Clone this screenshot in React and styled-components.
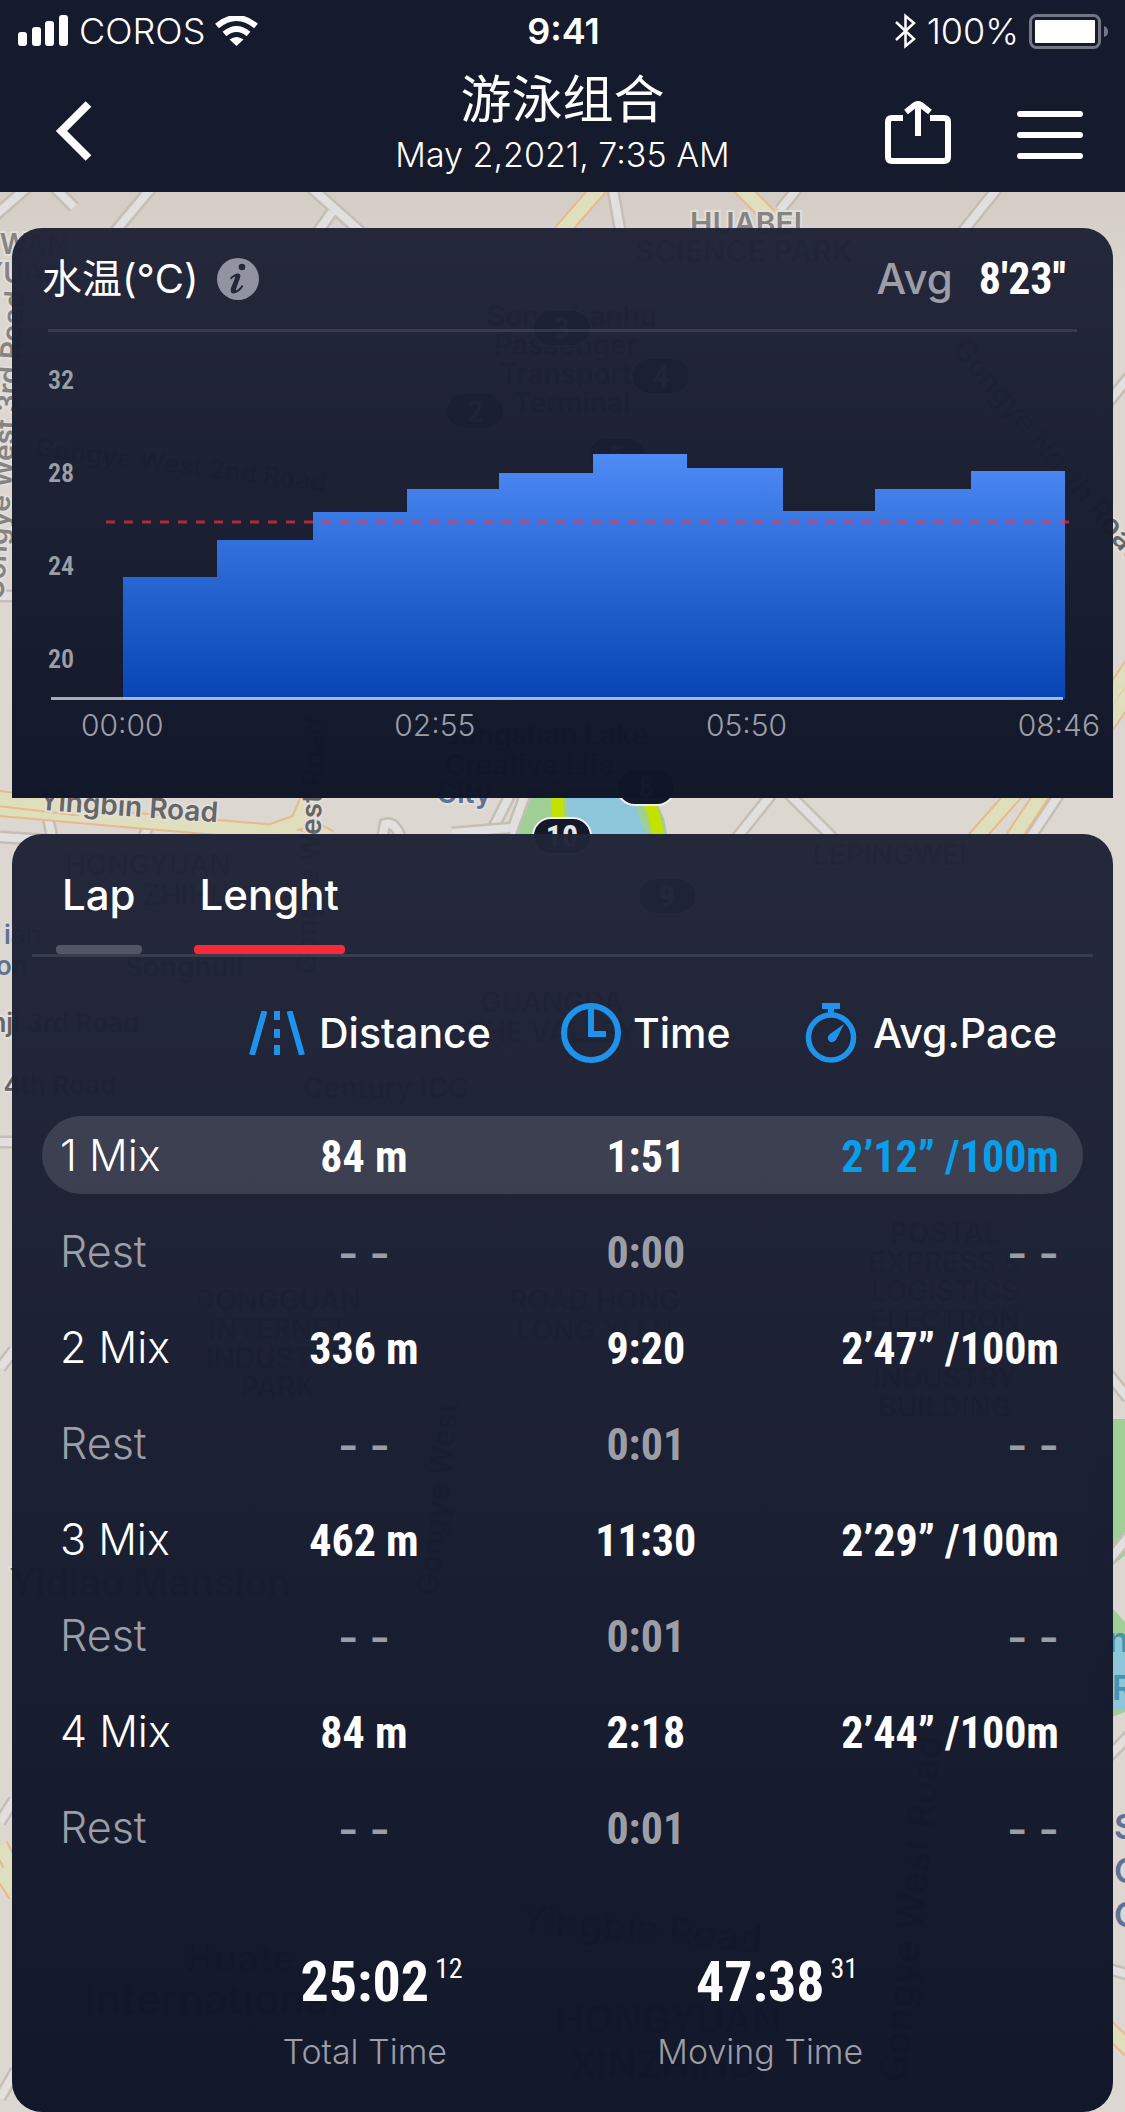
import React from "react";
import styled, { createGlobalStyle } from "styled-components";

const SANS = `"Inter", "Liberation Sans", "Noto Sans CJK SC", sans-serif`;
const NARROW = `"Liberation Sans Narrow", "Roboto Condensed", "Open Sans Condensed", "Roboto", sans-serif`;
const MUTED = "#9b9ea7";
const BLUE = "#1f93ec";

const GlobalStyle = createGlobalStyle`
  * { box-sizing: border-box; }
  body { margin: 0; background: #dcd8d1; font-family: ${SANS}; color: #fff; }
  button { border: 0; padding: 0; background: none; color: inherit; font: inherit; cursor: pointer; }
  svg { display: block; flex: none; }
  h1, h2, p { margin: 0; font-weight: 400; }
`;

const Screen = styled.div`
  position: relative;
  overflow: hidden;
`;

const MapCanvas = styled.svg`
  position: absolute;
  inset: 0;
  width: 100%;
  height: 100%;
  font-family: ${SANS};
`;

const Header = styled.header`
  position: relative;
  height: 192px;
  background: #151a2d;
`;

const StatusBar = styled.div`
  display: grid;
  grid-template-columns: 1fr auto 1fr;
  align-items: center;
  height: 62px;
  padding: 0 16px 0 18px;
`;

const StatusGroup = styled.div`
  display: flex;
  align-items: center;
  justify-content: ${(p) => (p.$end ? "flex-end" : "flex-start")};
  gap: 10px;
  font-size: 36px;
  font-weight: 300;
  line-height: 40px;
`;

const Clock = styled.div`
  font-size: 36px;
  font-weight: 600;
  line-height: 40px;
`;

const NavBar = styled.nav`
  display: grid;
  grid-template-columns: 1fr auto 1fr;
  align-items: center;
  height: 130px;
  padding: 12px 42px 0;
`;

const BackSlot = styled.div`
  padding-left: 12px;
`;

const TitleBlock = styled.div`
  margin: -6px 0;
  padding-bottom: 8px;
  text-align: center;
`;

const Title = styled.h1`
  height: 64px;
  font-size: 51px;
  line-height: 64px;
`;

const Subtitle = styled.p`
  height: 58px;
  font-size: 34px;
  font-weight: 300;
  line-height: 46px;
`;

const NavActions = styled.div`
  display: flex;
  justify-content: flex-end;
  gap: 66px;
`;

const Content = styled.main`
  position: relative;
  display: flex;
  flex-direction: column;
  gap: 36px;
  padding: 36px 12px 0;
`;

const Card = styled.section`
  border-radius: ${(p) => (p.$flatBottom ? "30px 30px 0 0" : "30px")};
  background: linear-gradient(rgba(32, 36, 55, 0.975), rgba(15, 20, 39, 0.985));
`;

const CardHeader = styled.div`
  display: flex;
  align-items: center;
  justify-content: space-between;
  height: 104px;
  margin: 0 36px;
  padding: 0 11px 0 0;
  border-bottom: 3px solid rgba(255, 255, 255, 0.1);
`;

const CardTitle = styled.h2`
  display: flex;
  align-items: center;
  gap: 18px;
  margin-left: -6px;
  font-size: 40px;
  line-height: 60px;
`;

const Average = styled.p`
  display: flex;
  align-items: center;
  gap: 26px;
  color: ${MUTED};
  font-size: 42px;
  font-weight: 500;
  line-height: 60px;
`;

const AverageValue = styled.strong`
  color: #fff;
  font-family: ${NARROW};
  font-size: 44px;
  font-weight: 700;
`;

const Plot = styled.div`
  display: grid;
  grid-template-columns: 48px 1fr;
  height: 368px;
  margin: 0 36px;
`;

const Bars = styled.svg`
  grid-column: 1 / -1;
  grid-row: 1;
  width: 100%;
  height: 368px;
`;

const YAxis = styled.div`
  grid-column: 1;
  grid-row: 1;
  display: grid;
  grid-auto-rows: 93px;
  align-items: center;
  padding-top: 1px;
  color: ${MUTED};
  font-family: ${NARROW};
  font-size: 26px;
  font-weight: 600;
`;

const XAxis = styled.div`
  display: flex;
  justify-content: space-between;
  height: 98px;
  padding: 0 13px 0 69px;
  color: ${MUTED};
  font-size: 30px;
  font-weight: 300;
  line-height: 50px;
`;

const Tabs = styled.div`
  display: flex;
  align-items: flex-end;
  gap: 52px;
  height: 123px;
  margin: 0 20px;
  padding: 0 24px;
  border-bottom: 3px solid rgba(255, 255, 255, 0.1);
`;

const Tab = styled.button`
  padding: 0 6px;
  font-size: 42px;
  font-weight: 500;
  line-height: 60px;

  &::after {
    content: "";
    display: block;
    height: 9px;
    margin: 20px -6px 0;
    border-radius: 4px;
    background: ${(p) => (p.$active ? "#fa2a3b" : "#525563")};
  }
`;

const LapTable = styled.table`
  width: calc(100% - 60px);
  margin: 0 30px;
  table-layout: fixed;
  border-collapse: separate;
  border-spacing: 0 18px;
`;

const HeadCell = styled.th`
  width: ${(p) => p.$width};
  height: 123px;
  padding: 0 ${(p) => (p.$end ? "26px" : "0")} 8px 0;
  font-size: 41px;
  font-weight: 500;
`;

const HeadLabel = styled.span`
  display: flex;
  align-items: center;
  justify-content: ${(p) => (p.$end ? "flex-end" : "center")};
  gap: ${(p) => p.$gap}px;
  white-space: nowrap;
`;

const Row = styled.tr`
  color: ${(p) => (p.$rest ? MUTED : "#fff")};

  th,
  td {
    background: ${(p) => (p.$active ? "rgba(255, 255, 255, 0.13)" : "none")};
  }
  td:last-child {
    color: ${(p) => (p.$active ? "#079fe9" : "inherit")};
  }
`;

const NameCell = styled.th`
  height: 78px;
  padding: 0 0 0 18px;
  border-radius: 39px 0 0 39px;
  font-size: 43px;
  font-weight: 300;
  text-align: left;
`;

const ValueCell = styled.td`
  padding: 4px ${(p) => p.$pad || 0}px 0 0;
  border-radius: ${(p) => (p.$last ? "0 39px 39px 0" : "0")};
  font-family: ${(p) => (p.$blank ? SANS : NARROW)};
  font-size: 44px;
  font-weight: ${(p) => (p.$blank ? 600 : 700)};
  line-height: 56px;
  text-align: ${(p) => (p.$last ? "right" : "center")};
  white-space: nowrap;
`;

const Totals = styled.div`
  display: grid;
  grid-template-columns: 1fr 1fr;
  height: 228px;
  padding: 60px 155px 0;
`;

const Total = styled.div`
  text-align: center;
`;

const TotalValue = styled.p`
  display: grid;
  grid-template-columns: 1fr auto 1fr;
  column-gap: 6px;
  height: 78px;
  font-family: ${NARROW};
  font-size: 56px;
  font-weight: 700;
  line-height: 76px;
`;

const Hundredths = styled.span`
  grid-column: 3;
  text-align: left;
  font-size: 28px;
  font-weight: 400;
  line-height: 50px;
`;

const Whole = styled.span`
  grid-column: 2;
`;

const TotalLabel = styled.p`
  color: ${MUTED};
  font-size: 34px;
  font-weight: 300;
  line-height: 60px;
`;

function Road({ d, main }) {
  return (
    <g fill="none">
      <path d={d} stroke={main ? "#e8b98b" : "#c6beb4"} strokeWidth={main ? 17 : 13} />
      <path d={d} stroke={main ? "#dfdfbd" : "#e1e0df"} strokeWidth={main ? 13 : 8} />
    </g>
  );
}

const routeMarks = [
  [562, 327, 3], [661, 375, 4], [475, 410, 2], [617, 455, 5],
  [646, 786, 8], [562, 835, 10], [667, 895, 9],
];

const mapLabels = [
  [746, 234, "HUABEI", 0, 30, "#858480"], [744, 262, "SCIENCE PARK", 0, 30],
  [34, 254, "WAN", 0, 28, "#858480"], [24, 283, "YUAN", 0, 28, "#858480"],
  [572, 326, "Songshanhu", 0, 28], [566, 355, "Passenger", 0, 28], [566, 384, "Transport", 0, 28], [572, 413, "Terminal", 0, 28],
  [180, 474, "Gongye West 2nd Road", 7, 26], [1042, 458, "Gongye North Road", 50, 30],
  [14, 446, "Gongye West 3rd Road", -86, 28, "#858480"],
  [128, 816, "Yingbin Road", 4, 28], [320, 846, "Gongye West Road", -88, 28],
  [545, 745, "Songshan Lake", 0, 28], [530, 775, "Creative Life", 0, 28], [464, 803, "City", 0, 28, "#5f7196"],
  [148, 875, "HONGYUAN", 0, 28], [190, 905, "ZHIHUI", 0, 28], [890, 865, "LEPINGWEI", 0, 28],
  [184, 977, "Songhuli", 0, 28], [552, 1012, "GUANGDA", 0, 28], [552, 1042, "THE VALLEY", 0, 28],
  [54, 1032, "Jinji 3rd Road", 0, 26], [386, 1098, "Century ICC", 0, 28], [60, 1094, "4th Road", 0, 26],
  [278, 1310, "DONGGUAN", 0, 28], [278, 1339, "INTERNET", 0, 28], [278, 1368, "INDUSTRY", 0, 28], [278, 1397, "PARK", 0, 28],
  [595, 1310, "ROAD HONG", 0, 28], [595, 1340, "LONG YI LU", 0, 28],
  [945, 1243, "POSTAL", 0, 28], [945, 1272, "EXPRESS &", 0, 28], [945, 1301, "LOGISTICS", 0, 28],
  [945, 1330, "ELECTRON", 0, 28], [945, 1388, "INDUSTRY", 0, 28], [945, 1417, "BUILDING", 0, 28],
  [150, 1596, "Yidiao Mansion", 0, 38], [448, 1500, "Gongye West", -84, 30],
  [640, 1942, "Yingbin Road", 5, 38], [240, 1972, "Huate", 0, 38], [212, 2014, "International", 0, 42],
  [668, 2033, "HONGYUAN", 0, 38], [668, 2078, "XINZHIHUI", 0, 38], [924, 1910, "Gongye West Road", -84, 38],
];

function MapBackdrop() {
  return (
    <MapCanvas viewBox="0 0 1125 2112" preserveAspectRatio="xMidYMin slice" aria-hidden="true">
      <defs>
        <linearGradient id="land" x1="0" y1="192" x2="0" y2="300" gradientUnits="userSpaceOnUse">
          <stop offset="0" stopColor="#d3cdc6" />
          <stop offset="1" stopColor="#dcd8d1" />
        </linearGradient>
      </defs>
      <rect width="1125" height="2112" fill="url(#land)" />
      <path d="M528 790 511 818 524 850 670 850 664 818 650 790Z" fill="#9fcf94" />
      <path d="M566 790 572 850 655 850 640 820 632 790Z" fill="#8dc6da" />
      <path d="M1090 1419H1125V1555L1105 1572V1600L1125 1622V1712L1090 1725Z" fill="#9fcf94" />
      <path d="M1105 1640H1125V1710H1105Z" fill="#8dc6da" />
      <Road d="M-10 220 30 185M52 185 74 207M108 240 154 185M308 185 370 240M312 240 332 212" />
      <Road d="M612 185 622 240M780 210 800 185M956 240 1000 185M1100 412 1130 376" />
      <Road d="M0 596H40M0 837 60 841M48 818 55 850M150 822 138 850M510 795 482 850M525 795 505 850" />
      <Road d="M380 850 385 824Q398 820 404 850M452 833 510 828M735 840 775 790M785 790 835 840M1022 850 1062 790" />
      <Road d="M0 1142H16M0 1368 14 1350M1105 1370 1128 1398M1105 1565 1130 1535M0 1822 14 1800M1105 1760 1130 1735M0 2098 16 2070M1105 1968 1130 1975" />
      <Road main d="M554 240 602 185M738 185 778 225M-5 808 130 820 270 832 298 822 312 790M270 830 345 850M305 825 330 838" />
      <Road main d="M-5 798 80 808M965 850 1018 790M1005 850 1045 790M1105 705 1135 660M1105 728 1135 685M0 1845 16 1875M0 1870 16 1895M1105 2025 1130 2050" />
      <path d="M556 780 560 850M640 780Q656 812 661 850" fill="none" stroke="#c3e200" strokeWidth="12" />
      {mapLabels.map(([x, y, text, angle, size, fill = "#666664"]) => (
        <text
          key={`${x}-${y}`} x={x} y={y} fontSize={size} fontWeight="600" textAnchor="middle"
          fill={fill} stroke="#e2deda" strokeWidth="4" paintOrder="stroke"
          transform={`rotate(${angle} ${x} ${y})`}
        >
          {text}
        </text>
      ))}
      {routeMarks.map(([x, y, n]) => (
        <g key={n}>
          <rect x={x - 29} y={y - 17} width="58" height="36" rx="18" fill="#131828" stroke="#eee" strokeWidth="2" />
          <text x={x} y={y + 12} fontSize="32" fontWeight="700" fontFamily="Roboto Condensed" textAnchor="middle" fill="#e4e4e4">{n}</text>
        </g>
      ))}
      <g fontWeight="600" fill="#5f7196">
        <g fontSize="34">
          <text x="1114" y="1839">S</text>
          <text x="1114" y="1883">C</text>
          <text x="1114" y="1927">C</text>
        </g>
        <g fontSize="26">
          <text x="4" y="944">ian</text>
          <text x="-4" y="975">on</text>
        </g>
        <g fontSize="34" fill="#4794ae">
          <text x="1108" y="1652">n</text>
          <text x="1112" y="1700">R</text>
        </g>
      </g>
    </MapCanvas>
  );
}

const SignalIcon = () => (
  <svg width="51" height="32" viewBox="0 0 51 32" fill="#fff" aria-hidden="true">
    <rect x="0" y="17" width="9" height="14" rx="3" />
    <rect x="14" y="12" width="9" height="19" rx="3" />
    <rect x="27" y="6" width="9" height="25" rx="3" />
    <rect x="41" y="0" width="9" height="31" rx="3" />
  </svg>
);

const WifiIcon = () => (
  <svg width="43" height="30" viewBox="0 0 43 30" aria-hidden="true">
    <path d="M2 10Q21.500-6 41 10M9.500 18Q21.500 8 33.500 18" fill="none" stroke="#fff" strokeWidth="6" />
    <path d="M14.500 23.500Q21.500 18.500 28.500 23.500L21.500 30Z" fill="#fff" />
  </svg>
);

const BluetoothIcon = () => (
  <svg width="22" height="36" viewBox="0 0 22 36" fill="none" stroke="#fff" strokeWidth="2.500" aria-hidden="true">
    <path d="M1 9 19 26 10.500 33V3L19 10 1 27" />
  </svg>
);

const BatteryIcon = () => (
  <svg width="80" height="36" viewBox="0 0 80 36" aria-hidden="true">
    <rect x="1.500" y="2.500" width="69" height="32" rx="6" fill="none" stroke="#747783" strokeWidth="3" />
    <rect x="6" y="7" width="60" height="23" rx="1" fill="#fff" />
    <path d="M75 13Q79 14 79 18.500T75 24Z" fill="#747783" />
  </svg>
);

const BackIcon = () => (
  <svg width="38" height="60" viewBox="0 0 38 60" fill="none" stroke="#fff" strokeWidth="8" aria-hidden="true">
    <path d="M34.500 3 7.500 30 34.500 57" />
  </svg>
);

const ShareIcon = () => (
  <svg width="66" height="64" viewBox="0 0 66 64" fill="none" stroke="#fff" strokeWidth="6" aria-hidden="true">
    <path d="M18 17H7Q3 17 3 21V56Q3 60 7 60H59Q63 60 63 56V21Q63 17 59 17H45" />
    <path d="M33 35V5M21 11 30 4Q33 2 36 4L45 11" />
  </svg>
);

const MenuIcon = () => (
  <svg width="66" height="64" viewBox="0 0 66 64" stroke="#fff" strokeWidth="6" strokeLinecap="round" aria-hidden="true">
    <path d="M3 13H63M3 34H63M3 55H63" />
  </svg>
);

const InfoIcon = () => (
  <svg width="42" height="42" viewBox="0 0 42 42" aria-hidden="true">
    <circle cx="21" cy="21" r="21" fill="#9194a0" />
    <circle cx="25" cy="9" r="3.300" fill="#24283b" />
    <path d="M13 20Q18 15 21 15.500 24.500 16 23 20L19 31Q18.500 33 20 32 23 30 25 27L26.500 28Q22 35 17 35.500 12.500 35.500 14 30L18 20Q18.500 18 17 19L14 21.500Z" fill="#24283b" />
  </svg>
);

const RoadIcon = () => (
  <svg width="56" height="44" viewBox="0 0 56 44" fill="none" stroke={BLUE} aria-hidden="true">
    <path d="M15.500 0 3 44M40.500 0 53 44" strokeWidth="6" />
    <path d="M28 0V9M28 18V27M28 34V44" strokeWidth="6" />
  </svg>
);

const ClockIcon = () => (
  <svg width="60" height="60" viewBox="0 0 60 60" fill="none" stroke={BLUE} aria-hidden="true">
    <circle cx="30" cy="30" r="27" strokeWidth="6" />
    <path d="M30 6V31H45" strokeWidth="6" />
  </svg>
);

const StopwatchIcon = () => (
  <svg width="52" height="60" viewBox="0 0 52 60" aria-hidden="true">
    <circle cx="26" cy="34.500" r="22.500" fill="none" stroke={BLUE} strokeWidth="5.500" />
    <path d="M17 0H35V6H29V12H23V6H17Z" fill={BLUE} />
    <path d="M39 21 31 37Q27 41 24 38 21 34 25 31Z" fill={BLUE} />
  </svg>
);

const edges = [75, 169, 265, 359, 451, 545, 639, 735, 827, 923, 1017];
const tops = [245, 208, 180, 157, 141, 122, 136, 179, 157, 139];
const outline =
  `M${edges[0]} 367` + tops.map((y, i) => `V${y}H${edges[i + 1]}`).join("") + "V367Z";

function TemperatureChart() {
  return (
    <Bars viewBox="0 0 1029 368" preserveAspectRatio="none" role="img" aria-label="水温(°C)">
      <defs>
        <linearGradient id="water" x1="0" y1="122" x2="0" y2="367" gradientUnits="userSpaceOnUse">
          <stop offset="0" stopColor="#4e8bf5" />
          <stop offset="0.500" stopColor="#2866d2" />
          <stop offset="1" stopColor="#0645b5" />
        </linearGradient>
      </defs>
      <path d={outline} fill="url(#water)" />
      <path d="M3 366.500H1015" stroke="rgba(255,255,255,.64)" strokeWidth="3" />
      <path d="M58 190H1022" stroke="rgba(250,48,68,.66)" strokeWidth="3" strokeDasharray="9 9" />
    </Bars>
  );
}

const laps = [
  { name: "1 Mix", distance: "84 m", time: "1:51", pace: "2’12” /100m", active: true },
  { name: "Rest", distance: "- -", time: "0:00", pace: "- -", rest: true },
  { name: "2 Mix", distance: "336 m", time: "9:20", pace: "2’47” /100m" },
  { name: "Rest", distance: "- -", time: "0:01", pace: "- -", rest: true },
  { name: "3 Mix", distance: "462 m", time: "11:30", pace: "2’29” /100m" },
  { name: "Rest", distance: "- -", time: "0:01", pace: "- -", rest: true },
  { name: "4 Mix", distance: "84 m", time: "2:18", pace: "2’44” /100m" },
  { name: "Rest", distance: "- -", time: "0:01", pace: "- -", rest: true },
];

const totals = [
  { value: "25:02", hundredths: "12", label: "Total Time" },
  { value: "47:38", hundredths: "31", label: "Moving Time" },
];

export default function App() {
  return (
    <Screen>
      <GlobalStyle />
      <MapBackdrop />
      <Header>
        <StatusBar>
          <StatusGroup>
            <SignalIcon />
            <span>COROS</span>
            <WifiIcon />
          </StatusGroup>
          <Clock>9:41</Clock>
          <StatusGroup $end>
            <BluetoothIcon />
            <span>100%</span>
            <BatteryIcon />
          </StatusGroup>
        </StatusBar>
        <NavBar>
          <BackSlot>
            <button type="button" aria-label="Back"><BackIcon /></button>
          </BackSlot>
          <TitleBlock>
            <Title>游泳组合</Title>
            <Subtitle>May 2,2021, 7:35 AM</Subtitle>
          </TitleBlock>
          <NavActions>
            <button type="button" aria-label="Share"><ShareIcon /></button>
            <button type="button" aria-label="Menu"><MenuIcon /></button>
          </NavActions>
        </NavBar>
      </Header>
      <Content>
        <Card $flatBottom>
          <CardHeader>
            <CardTitle>
              水温(°C)
              <button type="button" aria-label="Info"><InfoIcon /></button>
            </CardTitle>
            <Average>
              Avg <AverageValue>8'23''</AverageValue>
            </Average>
          </CardHeader>
          <Plot>
            <TemperatureChart />
            <YAxis>
              {[32, 28, 24, 20].map((t) => <span key={t}>{t}</span>)}
            </YAxis>
          </Plot>
          <XAxis>
            {["00:00", "02:55", "05:50", "08:46"].map((t) => <span key={t}>{t}</span>)}
          </XAxis>
        </Card>
        <Card>
          <Tabs role="tablist">
            <Tab type="button" role="tab" aria-selected="false">Lap</Tab>
            <Tab type="button" role="tab" aria-selected="true" $active>Lenght</Tab>
          </Tabs>
          <LapTable>
            <thead>
              <tr>
                <HeadCell $width="20%" />
                <HeadCell $width="23%"><HeadLabel $gap={14}><RoadIcon />Distance</HeadLabel></HeadCell>
                <HeadCell $width="30%"><HeadLabel $gap={12}><ClockIcon />Time</HeadLabel></HeadCell>
                <HeadCell $width="27%" $end><HeadLabel $end $gap={16}><StopwatchIcon />Avg.Pace</HeadLabel></HeadCell>
              </tr>
            </thead>
            <tbody>
              {laps.map((lap, i) => (
                <Row key={i} $active={lap.active} $rest={lap.rest}>
                  <NameCell scope="row">{lap.name}</NameCell>
                  <ValueCell $pad={12} $blank={lap.rest}>{lap.distance}</ValueCell>
                  <ValueCell>{lap.time}</ValueCell>
                  <ValueCell $last $pad={24} $blank={lap.rest}>{lap.pace}</ValueCell>
                </Row>
              ))}
            </tbody>
          </LapTable>
          <Totals>
            {totals.map((t) => (
              <Total key={t.label}>
                <TotalValue>
                  <Whole>{t.value}</Whole>
                  <Hundredths>{t.hundredths}</Hundredths>
                </TotalValue>
                <TotalLabel>{t.label}</TotalLabel>
              </Total>
            ))}
          </Totals>
        </Card>
      </Content>
    </Screen>
  );
}
